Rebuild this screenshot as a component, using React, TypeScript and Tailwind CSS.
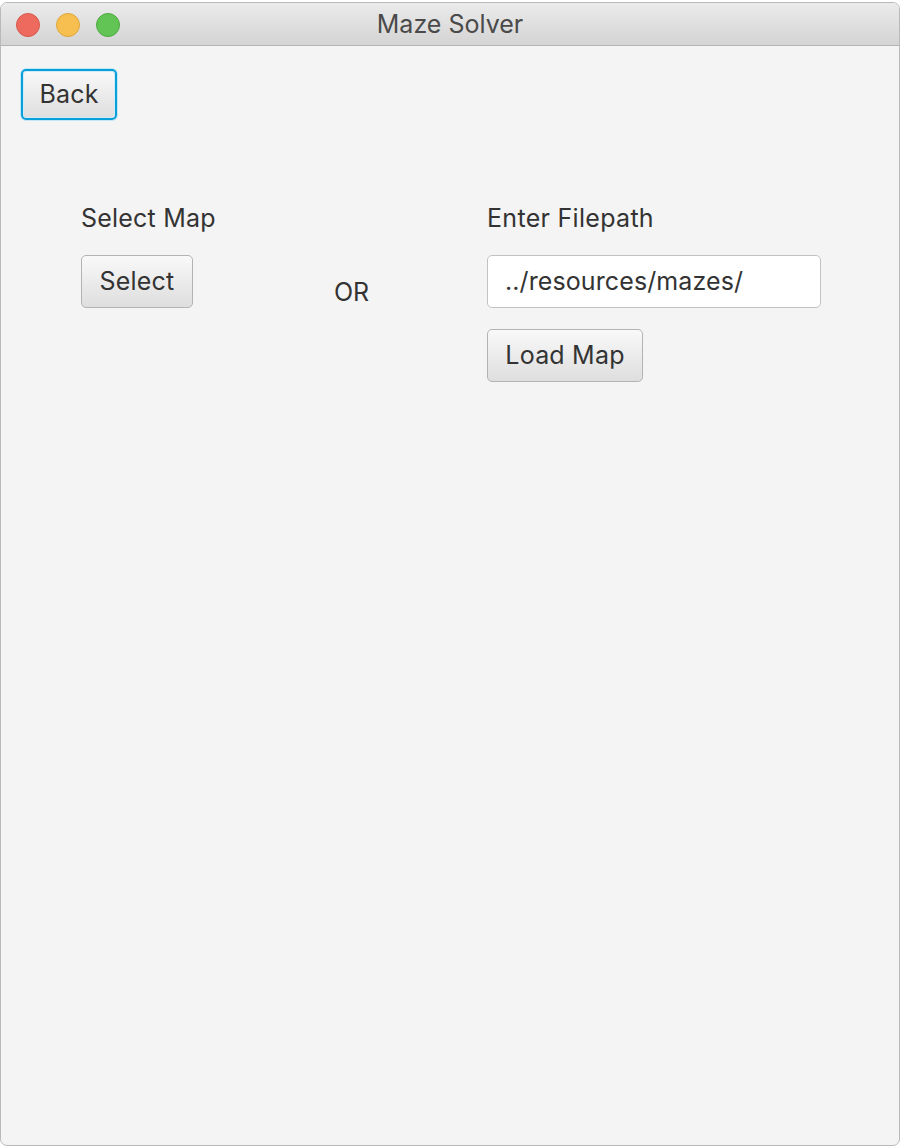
import { ReactNode } from "react";

function TrafficLight({ fill, ring }: { fill: string; ring: string }) {
  return (
    <span
      className="block h-[24px] w-[24px] rounded-full border"
      style={{ backgroundColor: fill, borderColor: ring }}
    />
  );
}

function FxButton({
  children,
  focused = false,
  className = "",
}: {
  children: ReactNode;
  focused?: boolean;
  className?: string;
}) {
  return (
    <button
      className={`flex items-center justify-center rounded-[5px] bg-gradient-to-b from-[#f9f9f9] to-[#dedede] text-[25px] leading-none tracking-[0.2px] text-[#333333] ${
        focused
          ? "border-2 border-[#08a0d8] shadow-[0_0_0_1px_#c4e5f4,inset_0_0_0_1px_#d2ebf6]"
          : "border border-[#b3b3b3]"
      } ${className}`}
    >
      {children}
    </button>
  );
}

export default function App() {
  return (
    <div
      className="h-[1148px] w-[902px] bg-white pr-[2px] pt-[2px]"
      style={{ fontFamily: "Inter, 'Liberation Sans', sans-serif" }}
    >
      <div className="flex h-[1144px] w-[900px] flex-col overflow-hidden rounded-[7px] border border-[#b9b9b9] bg-[#f4f4f4]">
        <header className="relative flex h-[43px] shrink-0 items-center border-b border-[#b4b4b4] bg-gradient-to-b from-[#ebebeb] to-[#d4d4d4] px-[15px]">
          <div className="flex gap-[16px] pt-[1px]">
            <TrafficLight fill="#ee6a5e" ring="#d8564b" />
            <TrafficLight fill="#f6bf4f" ring="#dea63a" />
            <TrafficLight fill="#61c454" ring="#4ea93f" />
          </div>
          <h1 className="pointer-events-none absolute inset-x-0 pt-[2px] text-center text-[25px] font-normal text-[#4a4a4a]">
            Maze Solver
          </h1>
        </header>

        <main className="flex flex-col px-[20px] pt-[23px]">
          <FxButton focused className="h-[51px] w-[96px]">
            Back
          </FxButton>

          <div className="mt-[84px] flex pl-[60px]">
            <section className="flex w-[253px] flex-col">
              <p className="text-[25px] leading-[28px] tracking-[0.2px] text-[#333333]">Select Map</p>
              <FxButton className="mt-[23px] h-[53px] w-[112px]">Select</FxButton>
            </section>

            <div className="w-[153px] pt-[74px] text-[25px] leading-[28px] text-[#333333]">OR</div>

            <section className="flex flex-col">
              <p className="text-[25px] leading-[28px] tracking-[0.3px] text-[#333333]">Enter Filepath</p>
              <div className="mt-[23px] flex h-[53px] w-[334px] items-center rounded-[5px] border border-[#c2c2c2] bg-white px-[17px] text-[25px] tracking-[0.1px] text-[#333333]">
                ../resources/mazes/
              </div>
              <FxButton className="mt-[21px] h-[53px] w-[156px]">Load Map</FxButton>
            </section>
          </div>
        </main>
      </div>
    </div>
  );
}
